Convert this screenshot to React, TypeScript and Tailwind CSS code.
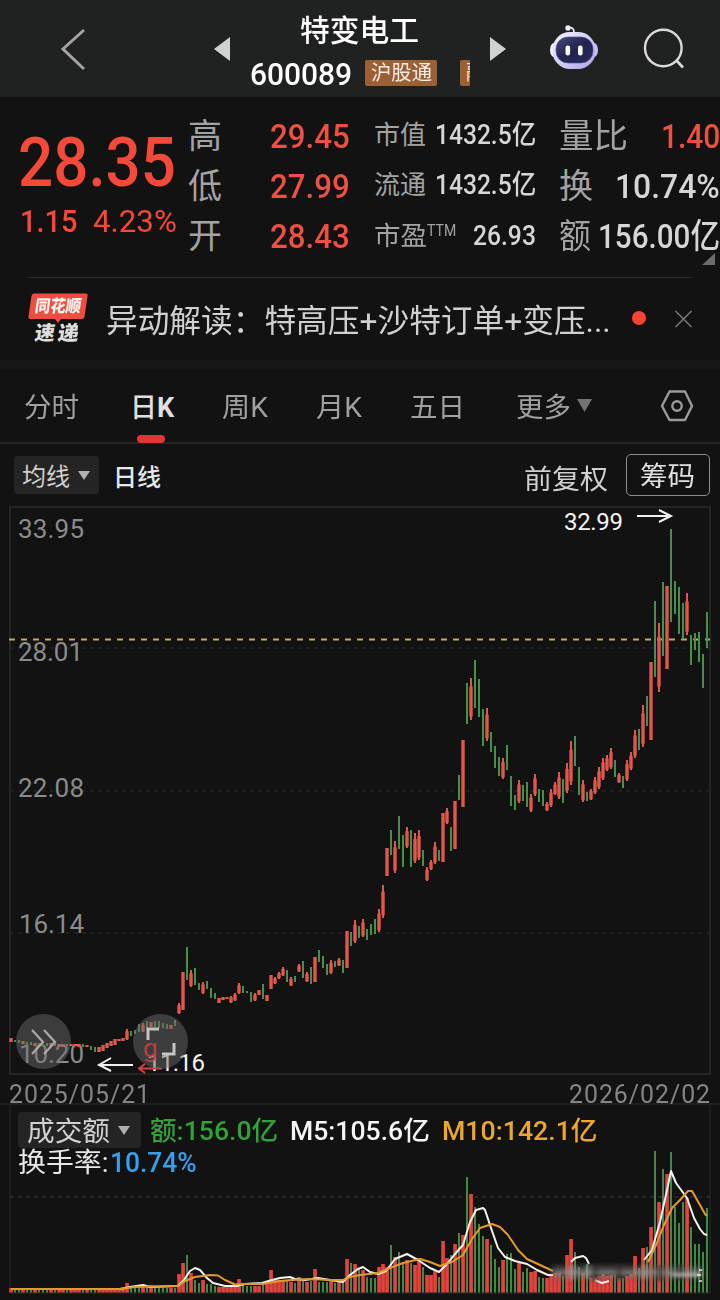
import { useLayoutEffect, useRef, useState } from "react";
import type { ReactNode } from "react";

/** Single line of text condensed or widened to the width of its box. */
function Fit({ className, children }: { className: string; children: ReactNode }) {
  const box = useRef<HTMLSpanElement>(null);
  const text = useRef<HTMLSpanElement>(null);
  const [scale, setScale] = useState(1);
  useLayoutEffect(() => {
    if (box.current && text.current && text.current.offsetWidth > 0) {
      setScale(box.current.clientWidth / text.current.offsetWidth);
    }
  }, [children]);
  return (
    <span ref={box} className={`block shrink-0 whitespace-nowrap ${className}`}>
      <span ref={text} className="inline-block origin-left" style={{ transform: `scaleX(${scale})` }}>
        {children}
      </span>
    </span>
  );
}

// One entry per trading day: direction, high, low, turnover top.
const DAYS = `
r1038,1042,1288 g1040,1042,1290 g1040,1043,1290 r1041,1044,1290 g1042,1045,1290 g1042,1045,1290 r1043,1046,1290 g1043,1046,1290
g1044,1046,1290 g1043,1046,1290 r1043,1046,1289 g1043,1046,1290 r1044,1047,1290 r1044,1047,1289 g1044,1046,1290 r1044,1046,1290
r1044,1046,1289 r1044,1047,1289 g1044,1047,1290 r1045,1047,1290 g1046,1050,1289 g1047,1052,1289 r1047,1052,1290 r1045,1051,1289
r1043,1048,1289 r1041,1046,1288 r1039,1045,1289 r1039,1041,1289 r1038,1041,1288 r1029,1040,1283 g1031,1036,1287 g1030,1034,1288
g1024,1032,1287 r1023,1032,1287 g1021,1030,1287 r1022,1027,1285 g1021,1027,1288 g1021,1028,1288 g1023,1028,1288 g1024,1029,1288
r1025,1029,1288 g1020,1026,1288 r1003,1014,1274 r972,1010,1263 g947,980,1255 r970,987,1273 g968,985,1280 g983,990,1283
r982,994,1280 g981,989,1284 g988,998,1284 g993,999,1286 r998,1003,1287 r997,1000,1287 r997,999,1287 r996,1003,1286
r993,1001,1286 r983,994,1279 g986,993,1284 g991,993,1286 g992,1002,1286 r993,1001,1286 r990,995,1286 g984,999,1282
r995,1001,1284 r975,989,1270 r977,984,1280 r972,979,1280 r967,976,1281 g970,982,1280 r977,986,1282 g976,982,1283
r964,972,1277 g961,978,1281 r972,982,1282 g967,984,1281 r957,982,1269 g950,962,1282 g956,968,1282 g964,975,1282
r960,974,1280 g961,967,1283 r958,966,1282 g960,973,1283 r931,968,1259 g932,946,1263 r920,943,1264 g926,938,1268
r919,937,1270 g929,940,1277 g924,935,1278 g919,934,1278 r909,932,1267 r885,918,1264 r848,876,1267 g830,855,1245
r841,873,1257 g816,849,1252 g835,867,1263 r827,848,1260 g830,867,1263 r833,863,1265 r830,860,1258 g850,866,1267
r867,881,1275 r860,870,1275 r842,864,1271 g850,861,1277 r813,862,1241 r808,824,1258 g827,851,1255 r801,849,1244
g775,800,1233 r740,807,1235 g683,724,1177 r678,720,1194 g660,708,1207 g679,717,1224 g709,746,1236 r708,741,1239
g732,752,1245 g746,768,1259 g757,776,1267 r758,779,1260 g745,770,1254 g776,806,1253 g795,810,1269 r780,803,1263
g785,801,1272 g782,807,1268 r794,812,1272 r774,796,1271 g789,802,1277 g790,806,1278 r802,811,1278 r789,807,1275
r782,795,1273 r772,799,1273 g779,803,1276 r763,793,1255 r741,785,1239 g736,766,1252 g767,795,1267 r780,802,1273
g792,801,1264 r789,800,1278 r777,794,1277 r767,789,1276 r758,780,1274 r755,771,1276 r748,769,1275 g760,777,1274
r773,783,1278 g776,788,1278 r760,781,1276 r752,770,1274 r730,758,1256 g729,750,1268 r705,747,1248 g696,726,1247
r662,740,1227 g601,677,1151 r623,692,1202 g582,656,1169 r586,669,1174 g529,622,1152 g581,614,1207 g587,634,1223
g603,639,1202 r593,635,1198 g635,665,1227 g633,650,1244 g632,662,1244 g654,688,1252 g612,648,1208`
  .trim()
  .split(/\s+/)
  .map((entry, i) => {
    const [high, low, volume] = entry.slice(1).split(",").map(Number);
    return { x: 11 + i * 4, up: entry[0] === "r", high, low, volume };
  });

// Days that opened and closed at the extremes, drawn without wicks.
const SOLID = new Set([43, 65, 76, 84, 94, 108, 111, 113, 160, 164]);

function PriceChart() {
  return (
    <svg className="block" width="720" height="580" viewBox="0 500 720 580">
      <g fill="none" stroke="#252525" strokeWidth="2">
        <path d="M10 507H710V1074H10Z" />
        <path d="M10 648H710M10 791H710M10 933H710" strokeWidth="1.3" strokeDasharray="4 4" />
      </g>
      <g className="font-['Roboto']" fill="#8b8b8b" fontSize="26">
        <text x="18" y="538" textLength="66">33.95</text>
        <text x="18" y="661" textLength="65">28.01</text>
        <text x="18" y="797" textLength="66">22.08</text>
        <text x="19" y="933" textLength="65">16.14</text>
        <text x="19" y="1063" textLength="65">10.20</text>
      </g>
      <path d="M9 639.5H710" stroke="#c9a465" strokeWidth="2" strokeDasharray="6 6" />
      {DAYS.map((d, i) => {
        const h = d.low - d.high;
        if (!d.up) return <rect key={i} x={d.x - 1} y={d.high} width="2" height={h} fill="#43924a" />;
        const trim = SOLID.has(i) || h < 7 ? 0 : h * 0.2;
        return (
          <g key={i} fill="#e2574a">
            <rect x={d.x - 1} y={d.high} width="2" height={h} />
            <rect x={d.x - 1.7} y={d.high + trim} width="3.4" height={h - trim * 1.4} />
          </g>
        );
      })}
      <g className="font-['Roboto']" fill="#f4f4f4" fontSize="24">
        <text x="564" y="530" textLength="59">32.99</text>
        <text x="147" y="1071" textLength="58">11.16</text>
      </g>
      <g fill="none" stroke="#f0f0f0" strokeWidth="2">
        <path d="M637 516H670M659 510L671 516L659 522" />
        <path d="M133 1065H100M111 1058L99 1065L111 1071" />
      </g>
      <path d="M162 1068.500H140M145 1064L139 1068.500L145 1073" fill="none" stroke="#d93f42" strokeWidth="2" />
    </svg>
  );
}

function VolumeChart() {
  return (
    <svg className="absolute inset-0" width="720" height="195" viewBox="0 1105 720 195">
      <defs>
        <linearGradient id="fade" x1="0" y1="0" x2="0" y2="1">
          <stop offset="0" stopColor="#5a5552" stopOpacity="0" />
          <stop offset=".5" stopColor="#8d8986" stopOpacity=".8" />
          <stop offset="1" stopColor="#5a5552" stopOpacity="0" />
        </linearGradient>
        <filter id="soft" x="-10%" y="-40%" width="120%" height="180%">
          <feGaussianBlur stdDeviation="2.500 .8" />
        </filter>
      </defs>
      <path d="M10 1105V1293M710 1105V1293M10 1293H710" stroke="#232323" strokeWidth="1.500" />
      <path d="M10 1197H710" stroke="#2c2c2c" strokeWidth="1.500" strokeDasharray="4 4" />
      {DAYS.map((d, i) => (
        <rect
          key={i}
          x={d.up ? d.x - 1.8 : d.x - 1}
          y={d.volume}
          width={d.up ? 3.7 : 2}
          height={1292.500 - d.volume}
          fill={d.up ? "#e0443c" : "#3e8c43"}
        />
      ))}
      <g fill="none" strokeWidth="2" strokeLinejoin="round">
        <path
          stroke="#f6f3ee"
          d="M11 1289L60 1289L120 1289L130 1287L143 1285L150 1287L178 1286L184 1280L190 1271L195 1268L200 1270L207 1278L213 1283L225 1286L237 1286L245 1284L262 1283L272 1280L280 1278L290 1277L295 1279L305 1280L318 1278L330 1280L343 1282L350 1275L358 1269L363 1267L370 1272L378 1274L386 1271L395 1259L407 1254L418 1260L430 1268L439 1272L447 1264L455 1254L463 1245L470 1222L476 1210L483 1208L485 1210L491 1228L498 1248L505 1257L515 1261L527 1264L537 1270L548 1275L553 1275M571 1262L575 1258L583 1256L586 1258L589 1264M595 1280L602 1283L609 1281M644 1260L652 1250L660 1222L667 1190L671 1171L676 1183L687 1198L694 1218L700 1229L704 1234L707 1235"
        />
        <path
          stroke="#e39a2d"
          d="M11 1289L120 1289L135 1287L150 1286.500L178 1286L185 1281L195 1277L210 1275L218 1275.500L225 1280L235 1284.500L245 1284L262 1284L280 1281L292 1280L310 1279L330 1280L343 1280L350 1277L360 1275L378 1273L390 1268L403 1263L420 1259L430 1262L440 1266L452 1262L463 1255L472 1239L480 1228L492 1224L500 1227L508 1235L518 1250L527 1259L540 1265L553 1271M648 1262L656 1245L664 1225L672 1208L680 1200L688 1191L692 1191L700 1205L705 1214L707 1216"
        />
      </g>
      <g filter="url(#soft)">
        <rect x="552" y="1262" width="150" height="21" fill="url(#fade)" />
        <path d="M572 1265V1280M588 1265V1279M645 1264V1279" stroke="#c8c4c0" strokeWidth="3" opacity=".5" />
        <path d="M595 1264V1281M619 1264V1280M660 1265V1281M680 1264V1281" stroke="#2a2321" strokeWidth="6" opacity=".6" />
        <path d="M672 1275H700" stroke="#bdbbb8" strokeWidth="4" opacity=".6" />
      </g>
      <path d="M699 1270H702M697 1275H701M699 1281H702" stroke="#e8e8e8" strokeWidth="1.300" />
    </svg>
  );
}

function Robot() {
  return (
    <svg width="50" height="46" viewBox="549 24 50 46">
      <defs>
        <linearGradient id="shell" x1="0" y1="0" x2="1" y2="1">
          <stop offset="0" stopColor="#f3f3ff" />
          <stop offset=".6" stopColor="#cdc7f4" />
          <stop offset="1" stopColor="#aaa0e6" />
        </linearGradient>
        <linearGradient id="visor" x1="0" y1="0" x2="1" y2="1">
          <stop offset="0" stopColor="#434981" />
          <stop offset=".5" stopColor="#20244f" />
          <stop offset="1" stopColor="#282b5c" />
        </linearGradient>
      </defs>
      <path d="M568 28Q574 26 574 33" fill="none" stroke="#dedff2" strokeWidth="1.800" />
      <circle cx="568" cy="28" r="2.700" fill="#eeeefa" />
      <ellipse cx="554" cy="50" rx="4" ry="7" fill="#eeeefd" />
      <ellipse cx="594" cy="50" rx="4" ry="7" fill="#c8c1f4" />
      <rect x="552.500" y="32" width="43" height="37" rx="17.500" fill="url(#shell)" />
      <rect x="556" y="37" width="37" height="26" rx="12" fill="url(#visor)" stroke="#5b558c" strokeWidth=".7" />
      <rect x="565.500" y="45.500" width="4.600" height="10" rx="2.200" fill="#fff" />
      <rect x="578" y="45.500" width="4.600" height="10" rx="2.200" fill="#fff" />
    </svg>
  );
}

function Header() {
  return (
    <header className="flex h-[97px] bg-[#202221]">
      <svg className="mt-[28px] ml-[60px]" width="26" height="44" viewBox="59 28 26 44">
        <path d="M83 30L62 49L83 69" fill="none" stroke="#a4a4a4" strokeWidth="3" />
      </svg>
      <svg className="mt-[37px] ml-[128px]" width="16" height="24" viewBox="0 0 16 24">
        <path d="M16 0V24L0 12Z" fill="#d0d1d0" />
      </svg>
      <div className="ml-[20px] w-[220px] overflow-hidden pt-[10px]">
        <Fit className="ml-[50px] h-[40px] w-[119px] text-[30px] leading-[41px] font-medium text-white">特变电工</Fit>
        <div className="mt-[2px] flex h-[44px] pt-[8px]">
          <Fit className="-mt-[6px] h-[40px] w-[102px] text-[32px] leading-[40px] font-medium text-white">600089</Fit>
          <span className="ml-[9px] h-[24px] w-px bg-[#7d522f]" />
          <span className="ml-[4px] h-[26px] w-[72px] shrink-0 rounded-[2px] bg-[#9a6036] pl-[6px]">
            <Fit className="w-[61px] text-[20px] leading-[27px] text-[#f5ece4]">沪股通</Fit>
          </span>
          <span className="ml-[23px] h-[26px] w-[72px] shrink-0 rounded-[2px] bg-[#9a6036] pl-[6px] text-[20px] leading-[27px] whitespace-nowrap text-[#f5ece4]">
            融资
          </span>
        </div>
      </div>
      <svg className="mt-[37px] ml-[20px]" width="16" height="24" viewBox="0 0 16 24">
        <path d="M0 0V24L16 12Z" fill="#d0d1d0" />
      </svg>
      <div className="mt-[24px] ml-[43px]">
        <Robot />
      </div>
      <svg className="mt-[27px] ml-[42px]" width="46" height="44" viewBox="641 27 46 44">
        <circle cx="663.300" cy="48" r="18.300" fill="none" stroke="#dadada" strokeWidth="2.400" />
        <path d="M676 60L683 67.500" stroke="#dadada" strokeWidth="2.600" />
      </svg>
    </header>
  );
}

function Quote() {
  return (
    <section className="relative flex h-[180px] pt-[14px] leading-[50px] text-[#a3a3a3]">
      <div className="ml-[18px] w-[160px] pt-[15px] text-[#f5493a]">
        <Fit className="h-[72px] w-[158px] text-[69px] leading-[74px] font-medium">28.35</Fit>
        <div className="flex h-[44px] text-[32px] leading-[47px]">
          <Fit className="ml-[2px] w-[57px] font-medium">1.15</Fit>
          <Fit className="ml-[16px] w-[84px]">4.23%</Fit>
        </div>
      </div>
      <div className="ml-[10px] w-[162px] text-[34px]">
        <div className="flex h-[50px] justify-between">
          <span>高</span>
          <Fit className="w-[80px] font-medium text-[#ee5043]">29.45</Fit>
        </div>
        <div className="flex h-[50px] justify-between">
          <span>低</span>
          <Fit className="w-[80px] font-medium text-[#ee5043]">27.99</Fit>
        </div>
        <div className="flex h-[50px] justify-between">
          <span>开</span>
          <Fit className="w-[80px] font-medium text-[#ee5043]">28.43</Fit>
        </div>
      </div>
      <div className="ml-[24px] w-[162px] text-[26px]">
        <div className="flex h-[50px] justify-between leading-[49px]">
          <Fit className="w-[52px]">市值</Fit>
          <Fit className="w-[101px] text-[27px] font-medium text-[#d6d6d6]">1432.5亿</Fit>
        </div>
        <div className="flex h-[50px] justify-between leading-[49px]">
          <Fit className="w-[52px]">流通</Fit>
          <Fit className="w-[101px] text-[27px] font-medium text-[#d6d6d6]">1432.5亿</Fit>
        </div>
        <div className="flex h-[50px]">
          <Fit className="w-[53px]">市盈</Fit>
          <Fit className="w-[29px] text-[16px] leading-[40px]">TTM</Fit>
          <Fit className="ml-auto w-[63px] text-[27px] font-medium text-[#d6d6d6]">26.93</Fit>
        </div>
      </div>
      <div className="ml-[23px] w-[161px] text-[34px]">
        <div className="flex h-[50px] justify-between">
          <Fit className="w-[69px]">量比</Fit>
          <Fit className="w-[59px] font-medium text-[#ee5043]">1.40</Fit>
        </div>
        <div className="flex h-[50px] justify-between">
          <span>换</span>
          <Fit className="w-[105px] font-medium text-[#d6d6d6]">10.74%</Fit>
        </div>
        <div className="flex h-[50px] justify-between">
          <Fit className="w-[32px]">额</Fit>
          <Fit className="w-[122px] font-medium text-[#d6d6d6]">156.00亿</Fit>
        </div>
      </div>
      <svg className="absolute right-[5px] bottom-[12px]" width="13" height="12" viewBox="0 0 13 12">
        <path d="M13 0V12H0Z" fill="#6b6b6b" />
      </svg>
    </section>
  );
}

function News() {
  return (
    <section className="flex h-[83px]">
      <div className="relative ml-[28px] flex w-[60px] flex-col pt-[16px]">
        <svg className="absolute top-[16px] left-0" width="60" height="31" viewBox="28 293 60 31">
          <path d="M34 293.500H86Q88 293.500 87.500 296L84.500 317Q84 319 82 319H61L58 323L55 319H30Q28 319 28.500 316L31.500 296Q32 293.500 34 293.500Z" fill="#ee4d40" />
        </svg>
        <Fit className="relative ml-[7px] h-[28px] w-[46px] -skew-x-[8deg] text-[17px] leading-[27px] font-black text-[#fff3ee]">
          同花顺
        </Fit>
        <div className="ml-[7px] flex h-[24px] -skew-x-[8deg] justify-between text-[20px] leading-[24px] font-black text-[#dedede]">
          <Fit className="w-[20px]">速</Fit>
          <Fit className="mr-[9px] w-[21px]">递</Fit>
        </div>
      </div>
      <Fit className="ml-[18px] w-[505px] text-[32px] leading-[88px] text-[#d0d0d0]">异动解读：特高压+沙特订单+变压...</Fit>
      <span className="mt-[34px] ml-[21px] size-[14px] rounded-full bg-[#fb4331]" />
      <svg className="mt-[33px] ml-[28px]" width="19" height="18" viewBox="0 0 19 18">
        <path d="M1.500 1L17.500 17M17.500 1L1.500 17" stroke="#777" strokeWidth="1.600" />
      </svg>
    </section>
  );
}

function Tabs() {
  return (
    <nav className="flex h-[75px] border-b-2 border-[#242424] text-[27px] leading-[78px] text-[#a0a0a0]">
      <Fit className="ml-[24px] w-[55px]">分时</Fit>
      <div className="ml-[51px] w-[45px]">
        <Fit className="h-[66px] w-[44px] font-bold text-[#e0e0e0]">
          <span className="font-medium">日</span>K
        </Fit>
        <span className="ml-[7px] block h-[8px] w-[28px] rounded-[4px] bg-[#e03436]" />
      </div>
      <Fit className="ml-[47px] w-[46px]">周K</Fit>
      <Fit className="ml-[48px] w-[46px]">月K</Fit>
      <Fit className="ml-[48px] w-[55px]">五日</Fit>
      <Fit className="ml-[51px] w-[55px]">更多</Fit>
      <svg className="mt-[30px] ml-[6px]" width="15" height="13" viewBox="0 0 15 13">
        <path d="M0 0H15L7.500 13Z" fill="#737373" />
      </svg>
      <svg className="mt-[20px] ml-[67px]" width="36" height="34" viewBox="659 389 36 34">
        <path d="M669.500 391.500H685L692 406L685 420H669.500L662 406Z" fill="none" stroke="#9a9a9a" strokeWidth="2.400" strokeLinejoin="round" />
        <circle cx="677" cy="406" r="4.700" fill="none" stroke="#9a9a9a" strokeWidth="2.400" />
      </svg>
    </nav>
  );
}

function Toolbar() {
  return (
    <div className="flex h-[56px]">
      <div className="mt-[12px] ml-[14px] flex h-[38px] w-[85px] rounded-[4px] bg-[#242424] pl-[8px]">
        <Fit className="w-[48px] text-[24px] leading-[42px] text-[#cfcfcf]">均线</Fit>
        <svg className="mt-[15px] ml-[8px]" width="12" height="9" viewBox="0 0 12 9">
          <path d="M0 0H12L6 9Z" fill="#b0b0b0" />
        </svg>
      </div>
      <Fit className="mt-[12px] ml-[14px] w-[48px] text-[24px] leading-[44px] font-medium text-[#e8e8e8]">日线</Fit>
      <Fit className="mt-[12px] ml-[363px] w-[84px] text-[27px] leading-[48px] text-[#cfcfcf]">前复权</Fit>
      <div className="mt-[10px] ml-[18px] h-[42px] w-[84px] rounded-[5px] border border-[#8d8d8d] pl-[13px]">
        <Fit className="w-[55px] text-[27px] leading-[44px] text-[#e0e0e0]">筹码</Fit>
      </div>
    </div>
  );
}

export default function App() {
  return (
    <main className="h-[1300px] w-[720px] overflow-hidden bg-[#121212] font-['Roboto','Noto_Sans_CJK_SC',sans-serif]">
      <Header />
      <Quote />
      <div className="mx-[28px] -mb-px h-px bg-[#2c2c2c]" />
      <News />
      <div className="h-[9px] bg-[#171717]" />
      <Tabs />
      <Toolbar />
      <div className="relative h-[580px]">
        <PriceChart />
        <span className="absolute top-[514px] left-[16px] flex size-[55px] items-center justify-center rounded-full bg-[#707070]/45">
          <svg width="28" height="28" viewBox="0 0 28 28">
            <path d="M2 2L13 14L2 26M14 2L25 14L14 26" fill="none" stroke="#aaa" strokeWidth="2.200" />
          </svg>
        </span>
        <span className="absolute top-[514px] left-[133px] size-[55px] rounded-full bg-[#686868]/50">
          <span className="absolute top-[20px] left-[10px] text-[26px] leading-[28px] text-[#b3413f]">g</span>
          <svg className="absolute top-[12px] left-[12px]" width="32" height="32" viewBox="0 0 32 32">
            <path d="M3 14V3H14M29 17V28H17" fill="none" stroke="#c4c4c4" strokeWidth="3" />
          </svg>
        </span>
      </div>
      <div className="flex h-[25px] justify-between border-b-2 border-[#202020] pr-[9px] pl-[9px] text-[25px] leading-[29px] text-[#858585]">
        <Fit className="w-[142px] tracking-[1px]">2025/05/21</Fit>
        <Fit className="w-[142px] tracking-[1px]">2026/02/02</Fit>
      </div>
      <section className="relative h-[195px]">
        <VolumeChart />
        <div className="relative flex h-[44px] pt-[7px] text-[26px] leading-[39px]">
          <div className="ml-[18px] flex h-[36px] w-[123px] rounded-[4px] bg-[#242424] pl-[9px]">
            <Fit className="w-[83px] text-[27px] leading-[41px] text-[#d2d2d2]">成交额</Fit>
            <svg className="mt-[14px] ml-[8px]" width="12" height="9" viewBox="0 0 12 9">
              <path d="M0 0H12L6 9Z" fill="#b0b0b0" />
            </svg>
          </div>
          <Fit className="ml-[9px] w-[128px] font-medium text-[#35a03a]">额:156.0亿</Fit>
          <Fit className="ml-[12px] w-[140px] font-medium text-[#f5f5f5]">M5:105.6亿</Fit>
          <Fit className="ml-[12px] w-[155px] font-medium text-[#eba830]">M10:142.1亿</Fit>
        </div>
        <div className="relative flex text-[27px] leading-[28px]">
          <Fit className="ml-[18px] w-[91px] text-[#e8e8e8]">换手率:</Fit>
          <Fit className="ml-[1px] w-[87px] font-medium text-[#35a0ec]">10.74%</Fit>
        </div>
      </section>
    </main>
  );
}
